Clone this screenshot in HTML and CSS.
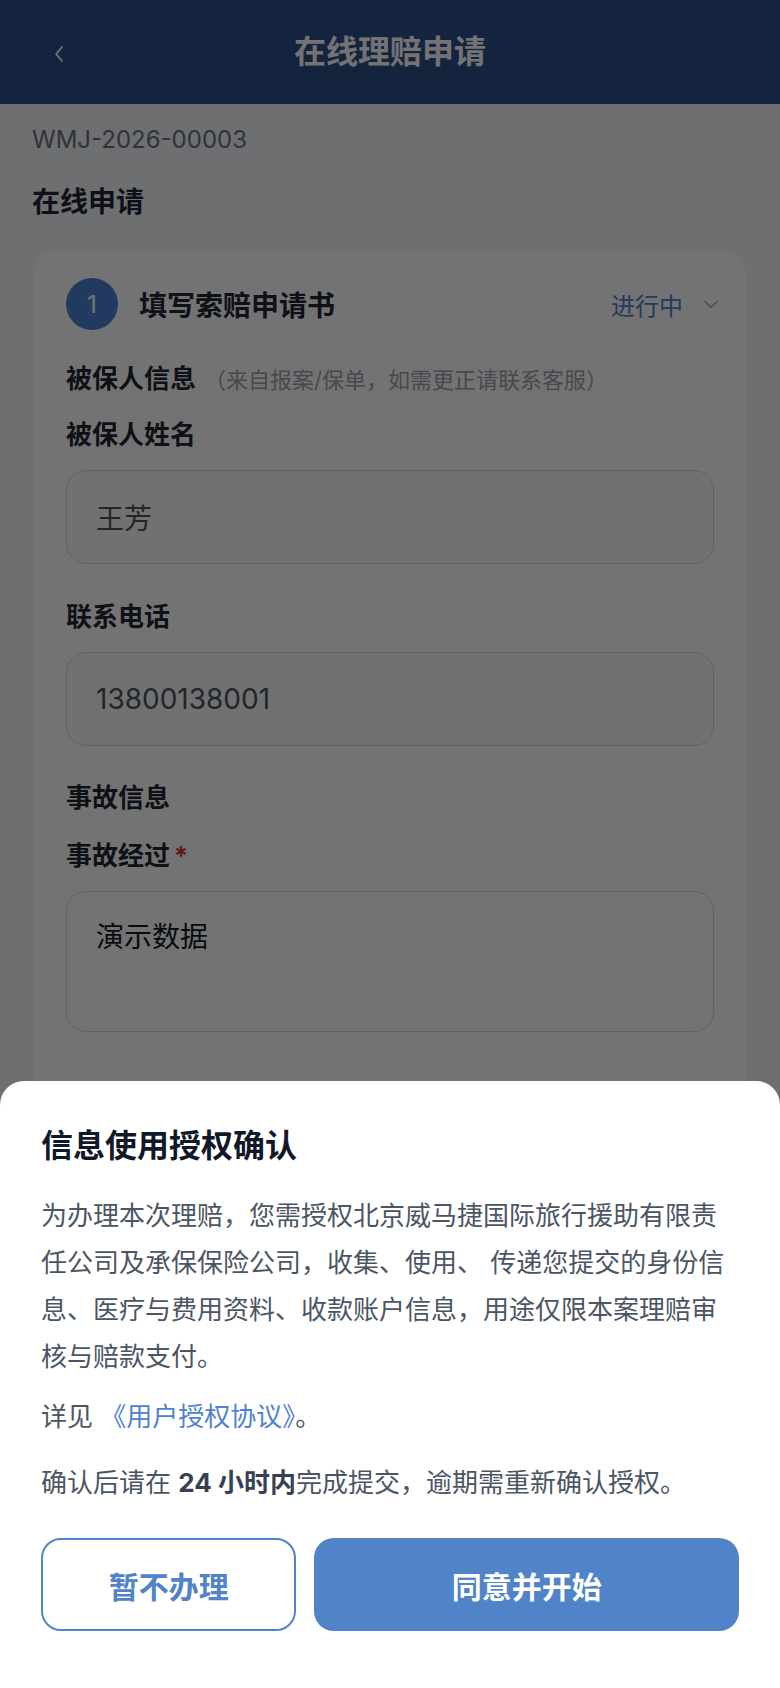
FILE: index.html
```html
<!DOCTYPE html>
<html lang="zh-CN">
<head>
<meta charset="utf-8">
<meta name="viewport" content="width=device-width, initial-scale=1">
<title>在线理赔申请</title>
<link rel="stylesheet" href="styles.css">
</head>
<body>
<div class="page">
  <header class="topbar">
    <button class="back" type="button" aria-label="返回">
      <svg width="8" height="16" viewBox="0 0 8 16"><polyline points="7,1 1.2,8 7,15" fill="none" stroke="#ffffff" stroke-width="1.8" stroke-linecap="round" stroke-linejoin="round"/></svg>
    </button>
    <h1 class="topbar-title">在线理赔申请</h1>
    <span class="topbar-side"></span>
  </header>

  <main class="content">
    <div class="case-no">WMJ-2026-00003</div>
    <h2 class="section-title">在线申请</h2>

    <section class="card">
      <div class="step-head">
        <span class="step-num">1</span>
        <span class="step-title">填写索赔申请书</span>
        <span class="step-status">进行中</span>
        <svg class="step-toggle" width="14" height="9" viewBox="0 0 14 9"><polyline points="1,1.5 7,7.5 13,1.5" fill="none" stroke="#a3a9b3" stroke-width="1.4" stroke-linecap="round" stroke-linejoin="round"/></svg>
      </div>

      <div class="group-title">被保人信息<span class="group-note">（来自报案/保单，如需更正请联系客服）</span></div>

      <div class="field">
        <div class="field-label">被保人姓名</div>
        <div class="input readonly">王芳</div>
      </div>

      <div class="field">
        <div class="field-label">联系电话</div>
        <div class="input readonly">13800138001</div>
      </div>

      <div class="group-title group-gap">事故信息</div>

      <div class="field field-tight">
        <div class="field-label">事故经过<span class="required">*</span></div>
        <div class="input textarea">演示数据</div>
      </div>
    </section>
  </main>

  <div class="mask"></div>

  <div class="sheet" role="dialog" aria-label="信息使用授权确认">
    <h3 class="sheet-title">信息使用授权确认</h3>
    <p class="sheet-text">为办理本次理赔，您需授权北京威马捷国际旅行援助有限责任公司及承保保险公司，收集、使用、 传递您提交的身份信息、医疗与费用资料、收款账户信息，用途仅限本案理赔审核与赔款支付。</p>
    <p class="sheet-text sheet-link-line">详见 <a class="sheet-link" href="#">《用户授权协议》</a>。</p>
    <p class="sheet-text sheet-note">确认后请在 <strong>24 小时内</strong>完成提交，逾期需重新确认授权。</p>
    <div class="sheet-actions">
      <button class="btn btn-outline" type="button">暂不办理</button>
      <button class="btn btn-primary" type="button">同意并开始</button>
    </div>
  </div>
</div>
</body>
</html>
```

FILE: styles.css
```css
* {
  box-sizing: border-box;
}

html,
body {
  margin: 0;
  padding: 0;
}

body {
  font-family: Inter, "Noto Sans CJK SC", sans-serif;
  background: #f4f6f9;
  color: #1f2937;
  width: 780px;
  min-height: 1688px;
}

.page {
  min-height: 1688px;
}

/* ---------- top bar ---------- */
.topbar {
  height: 104px;
  background: #30508a;
  display: grid;
  grid-template-columns: 1fr auto 1fr;
  align-items: center;
}

.back {
  justify-self: start;
  margin-left: 51px;
  padding: 4px;
  border: 0;
  background: transparent;
  display: flex;
  align-items: center;
  margin-top: 3px;
}

.topbar-title {
  margin: 0;
  font-size: 32px;
  line-height: 44px;
  font-weight: 600;
  color: #ffffff;
  letter-spacing: 0;
}

/* ---------- content ---------- */
.content {
  padding: 19px 34px 0;
}

.case-no {
  font-size: 24px;
  line-height: 34px;
  color: #6b7280;
  margin-left: -2px;
}

.section-title {
  margin: 25px 0 0;
  font-size: 28px;
  line-height: 40px;
  font-weight: 600;
  color: #1f2937;
  margin-left: -2px;
}

.card {
  margin-top: 28px;
  background: #ffffff;
  border-radius: 24px;
  padding: 28px 32px 120px;
}

.step-head {
  height: 52px;
  display: flex;
  align-items: center;
}

.step-num {
  width: 52px;
  height: 52px;
  border-radius: 50%;
  background: #4f82d4;
  color: #ffffff;
  font-size: 24px;
  display: flex;
  align-items: center;
  justify-content: center;
  flex: 0 0 auto;
}

.step-title {
  margin-left: 21px;
  font-size: 28px;
  font-weight: 600;
  color: #1f2937;
  flex: 1;
}

.step-status {
  font-size: 24px;
  color: #4f82d0;
}

.step-toggle {
  margin-left: 21px;
  margin-right: -4px;
}

.group-title {
  margin-top: 31px;
  font-size: 26px;
  line-height: 36px;
  font-weight: 600;
  color: #1f2937;
}

.group-gap {
  margin-top: 34px;
}

.group-note {
  margin-left: 8px;
  font-size: 22px;
  font-weight: 400;
  color: #9ca3af;
}

.field {
  margin-top: 35px;
}

.group-title + .field {
  margin-top: 19px;
}

.group-gap + .field-tight {
  margin-top: 22px;
}

.field-label {
  font-size: 26px;
  line-height: 36px;
  font-weight: 600;
  color: #1f2937;
  margin-bottom: 17px;
}

.required {
  color: #e02d2d;
  margin-left: 4px;
}

.input {
  height: 94px;
  border: 1px solid #d5d8de;
  border-radius: 20px;
  padding: 0 29px;
  display: flex;
  align-items: center;
  font-size: 28px;
  color: #111827;
  background: #ffffff;
}

.input.readonly {
  background: #fafbfc;
  color: #4b5563;
}

.input.textarea {
  height: 141px;
  align-items: flex-start;
  padding-top: 25px;
  line-height: 40px;
}

/* ---------- overlay + sheet ---------- */
.mask {
  position: fixed;
  inset: 0;
  background: rgba(0, 0, 0, 0.55);
}

.sheet {
  position: fixed;
  left: 0;
  right: 0;
  bottom: 0;
  background: #ffffff;
  border-radius: 24px 24px 0 0;
  padding: 43px 41px 57px;
}

.sheet-title {
  margin: 0;
  font-size: 32px;
  line-height: 44px;
  font-weight: 700;
  color: #111827;
}

.sheet-text {
  margin: 25px 0 0;
  font-size: 26px;
  line-height: 46.8px;
  color: #4b5563;
}

.sheet-link-line {
  margin-top: 14px;
}

.sheet-note {
  margin-top: 19px;
}

.sheet-note strong {
  font-weight: 700;
  color: #374151;
}

.sheet-link {
  color: #4f82d0;
  text-decoration: none;
}

.sheet-actions {
  margin-top: 31px;
  display: grid;
  grid-template-columns: 257fr 427fr;
  gap: 18px;
}

.btn {
  height: 93px;
  border-radius: 20px;
  font-family: Inter, "Noto Sans CJK SC", sans-serif;
  font-size: 30px;
  font-weight: 600;
  cursor: pointer;
}

.btn-outline {
  background: #ffffff;
  border: 2px solid #5083c8;
  color: #5083c8;
}

.btn-primary {
  background: #5083c8;
  border: 0;
  color: #ffffff;
}
```
